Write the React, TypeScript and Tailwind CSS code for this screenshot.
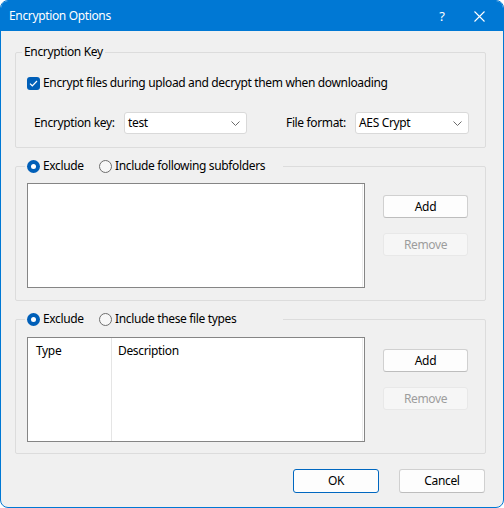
import React from "react";

const font = { fontFamily: '"Noto Sans", "Open Sans", sans-serif' };

function Chevron() {
  return (
    <svg width="9" height="5" viewBox="0 0 9 5" className="text-[#6b6b6b]">
      <path d="M0.5 0.5 L4.5 4.5 L8.5 0.5" fill="none" stroke="currentColor" strokeWidth="1" />
    </svg>
  );
}

function Combo({ value, width }: { value: string; width: string }) {
  return (
    <div
      className={`${width} h-[22px] flex items-center bg-white border border-[#d9d9d9] rounded-[3px] pl-[3px] pr-[6px]`}
    >
      <span className="text-[12px] leading-[16px] text-black">{value}</span>
      <span className="ml-auto flex items-center">
        <Chevron />
      </span>
    </div>
  );
}

function Radio({ checked, label, width }: { checked: boolean; label: string; width: string }) {
  return (
    <div className={`${width} flex items-center h-[16px]`}>
      {checked ? (
        <span className="w-[13px] h-[13px] rounded-full bg-[#005fb8] flex items-center justify-center shrink-0">
          <span className="w-[5px] h-[5px] rounded-full bg-white" />
        </span>
      ) : (
        <span className="w-[13px] h-[13px] rounded-full border border-[#6e6e6e] bg-[#f7f7f7] shrink-0" />
      )}
      <span className="ml-[3px] text-[12px] leading-[16px] text-black whitespace-nowrap">{label}</span>
    </div>
  );
}

function Btn({ label, disabled }: { label: string; disabled?: boolean }) {
  return (
    <div
      className={
        disabled
          ? "w-[85px] h-[23px] flex items-center justify-center rounded-[3px] border border-[#e8e8e8] bg-[#f6f6f6] text-[#9d9d9d] text-[12px]"
          : "w-[85px] h-[23px] flex items-center justify-center rounded-[3px] border border-[#d0d0d0] border-b-[#bdbdbd] bg-[#fdfdfd] text-black text-[12px]"
      }
    >
      {label}
    </div>
  );
}

function SideButtons() {
  return (
    <div className="ml-[18px] pt-[12px] flex flex-col gap-[15px]">
      <Btn label="Add" />
      <Btn label="Remove" disabled />
    </div>
  );
}

export default function App() {
  return (
    <div className="w-[504px] h-[508px] bg-white tracking-[-0.35px]" style={font}>
      <div className="w-full h-full flex flex-col border border-[#0078d4] rounded-[8px] overflow-hidden bg-[#f0f0f0]">
        {/* title bar */}
        <div className="h-[30px] shrink-0 bg-[#0078d4] flex items-center pl-[8px] text-white">
          <span className="text-[12px] leading-[16px]">Encryption Options</span>
          <span className="ml-auto w-[24px] text-center text-[13px] leading-[16px] mr-[20px]">?</span>
          <svg width="11" height="11" viewBox="0 0 11 11" className="mr-[18px]">
            <path d="M0.5 0.5 L10.5 10.5 M10.5 0.5 L0.5 10.5" stroke="white" strokeWidth="1.1" fill="none" />
          </svg>
        </div>

        <div className="flex flex-col px-[14px] text-[12px] leading-[16px] text-black">
          {/* encryption key group */}
          <fieldset className="mt-[13px] w-[471px] h-[104px] border border-[#dcdcdc] rounded-[2px]">
            <legend className="ml-[6px] px-[2px] h-[16px] leading-[16px]">Encryption Key</legend>
            <div className="mt-[15px] ml-[11px] h-[16px] flex items-center">
              <span className="w-[13px] h-[13px] rounded-[3px] bg-[#005fb8] flex items-center justify-center shrink-0">
                <svg width="9" height="7" viewBox="0 0 9 7">
                  <path d="M1 3.6 L3.3 5.8 L8 1" stroke="white" strokeWidth="1.2" fill="none" />
                </svg>
              </span>
              <span className="ml-[3px] whitespace-nowrap">
                Encrypt files during upload and decrypt them when downloading
              </span>
            </div>
            <div className="mt-[21px] h-[22px] flex items-center">
              <span className="ml-[18px] w-[90px] whitespace-nowrap">Encryption key:</span>
              <Combo value="test" width="w-[123px]" />
              <span className="ml-[39px] w-[69px] whitespace-nowrap">File format:</span>
              <Combo value="AES Crypt" width="w-[114px]" />
            </div>
          </fieldset>

          {/* subfolders group */}
          <fieldset className="mt-[10px] w-[471px] h-[143px] border border-[#dcdcdc] rounded-[2px]">
            <legend className="ml-[9px] px-[2px] h-[16px]">
              <div className="flex items-center">
                <Radio checked label="Exclude" width="w-[72px]" />
                <Radio checked={false} label="Include following subfolders" width="w-[182px]" />
              </div>
            </legend>
            <div className="mt-[9px] ml-[11px] flex">
              <div className="w-[338px] h-[105px] bg-white border border-[#858585] flex justify-end">
                <div className="w-[1px] h-full bg-[#ececec] mr-[1px]" />
              </div>
              <SideButtons />
            </div>
          </fieldset>

          {/* file types group */}
          <fieldset className="mt-[10px] w-[471px] h-[143px] border border-[#dcdcdc] rounded-[2px]">
            <legend className="ml-[9px] px-[2px] h-[16px]">
              <div className="flex items-center">
                <Radio checked label="Exclude" width="w-[72px]" />
                <Radio checked={false} label="Include these file types" width="w-[182px]" />
              </div>
            </legend>
            <div className="mt-[10px] ml-[11px] flex">
              <div className="w-[338px] h-[105px] bg-white border border-[#858585] flex">
                <div className="w-[84px] h-full border-r border-[#e5e5e5] pl-[8px] pt-[5px]">Type</div>
                <div className="flex-1 h-full border-r border-[#ececec] mr-[1px] pl-[6px] pt-[5px]">Description</div>
              </div>
              <SideButtons />
            </div>
          </fieldset>

          {/* dialog buttons */}
          <div className="mt-[15px] w-[471px] flex justify-end gap-[20px] pr-[1px]">
            <div className="w-[86px] h-[24px] flex items-center justify-center rounded-[3px] border border-[#0067c0] bg-[#fdfdfd]">
              OK
            </div>
            <div className="w-[86px] h-[24px] flex items-center justify-center rounded-[3px] border border-[#d0d0d0] border-b-[#bdbdbd] bg-[#fdfdfd]">
              Cancel
            </div>
          </div>
        </div>
      </div>
    </div>
  );
}
